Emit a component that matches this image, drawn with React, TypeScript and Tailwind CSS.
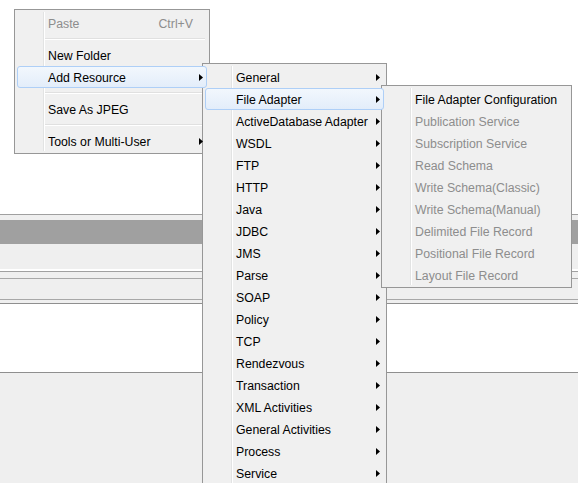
type Item = {
  label?: string;
  shortcut?: string;
  sub?: boolean;
  disabled?: boolean;
  active?: boolean;
  separator?: boolean;
};

const mainItems: Item[] = [
  { label: "Paste", shortcut: "Ctrl+V", disabled: true },
  { separator: true },
  { label: "New Folder" },
  { label: "Add Resource", sub: true, active: true },
  { separator: true },
  { label: "Save As JPEG" },
  { separator: true },
  { label: "Tools or Multi-User", sub: true },
];

const resourceItems: Item[] = [
  "General",
  "File Adapter",
  "ActiveDatabase Adapter",
  "WSDL",
  "FTP",
  "HTTP",
  "Java",
  "JDBC",
  "JMS",
  "Parse",
  "SOAP",
  "Policy",
  "TCP",
  "Rendezvous",
  "Transaction",
  "XML Activities",
  "General Activities",
  "Process",
  "Service",
].map((label) => ({ label, sub: true, active: label === "File Adapter" }));

const adapterItems: Item[] = [
  { label: "File Adapter Configuration" },
  { label: "Publication Service", disabled: true },
  { label: "Subscription Service", disabled: true },
  { label: "Read Schema", disabled: true },
  { label: "Write Schema(Classic)", disabled: true },
  { label: "Write Schema(Manual)", disabled: true },
  { label: "Delimited File Record", disabled: true },
  { label: "Positional File Record", disabled: true },
  { label: "Layout File Record", disabled: true },
];

function Arrow() {
  return (
    <svg width="4" height="7" viewBox="0 0 4 7" className="shrink-0">
      <path d="M0 0 L4 3.5 L0 7 Z" fill="#000" />
    </svg>
  );
}

function Menu({ items, className }: { items: Item[]; className: string }) {
  return (
    <div className={`absolute bg-[#f0f0f0] border border-[#979797] pt-[2px] pb-[1px] px-[2px] ${className}`}>
      {/* gutter line */}
      <div className="absolute top-[2px] bottom-[2px] left-[28px] w-[2px] border-l border-[#e2e3e3]">
        <div className="h-full w-px bg-white" />
      </div>
      {items.map((item, i) =>
        item.separator ? (
          <div key={i} className="h-[10px] flex flex-col justify-center pl-[27px] pr-[2px]">
            <div className="h-px bg-[#e0e0e0]" />
            <div className="h-px bg-white" />
          </div>
        ) : (
          <div
            key={i}
            className={`relative z-10 h-[22px] flex items-center pl-[30px] pr-[3px] rounded-[3px] border ${
              item.active
                ? "border-[#aecff7] bg-gradient-to-b from-[#f2f7fd] to-[#e3edfa]"
                : "border-transparent"
            } ${item.disabled ? "text-[#8d8d8d]" : "text-black"}`}
          >
            <span className="flex-1 whitespace-nowrap translate-y-[1px]">{item.label}</span>
            {item.shortcut && <span className="mr-[10px] translate-y-[1px]">{item.shortcut}</span>}
            {item.sub && <Arrow />}
          </div>
        )
      )}
    </div>
  );
}

export default function App() {
  return (
    <div
      className="relative w-[578px] h-[483px] overflow-hidden bg-white text-[12.3px] leading-none"
      style={{ fontFamily: '"Liberation Sans", Arial, sans-serif' }}
    >
      {/* background window */}
      <div className="flex flex-col h-full">
        <div className="h-[214px] bg-white" />
        <div className="h-px bg-[#a0a0a0]" />
        <div className="h-[5px] bg-[#efefef]" />
        <div className="h-[24px] bg-[#a0a0a0]" />
        <div className="h-[25px] bg-[#efefef]" />
        <div className="h-[2px] bg-white" />
        <div className="h-px bg-[#a0a0a0]" />
        <div className="h-[6px] bg-[#efefef]" />
        <div className="h-px bg-[#a8a8a8]" />
        <div className="h-[20px] bg-[#efefef]" />
        <div className="h-px bg-[#a8a8a8]" />
        <div className="h-[3px] bg-[#efefef]" />
        <div className="h-px bg-[#8f8f8f]" />
        <div className="h-[68px] bg-white" />
        <div className="h-px bg-[#8f8f8f]" />
        <div className="flex-1 bg-[#efefef]" />
      </div>

      <Menu items={mainItems} className="left-[14px] top-[9px] w-[196px]" />
      <Menu items={resourceItems} className="left-[202px] top-[63px] w-[185px]" />
      <Menu items={adapterItems} className="left-[381px] top-[85px] w-[191px]" />
    </div>
  );
}
